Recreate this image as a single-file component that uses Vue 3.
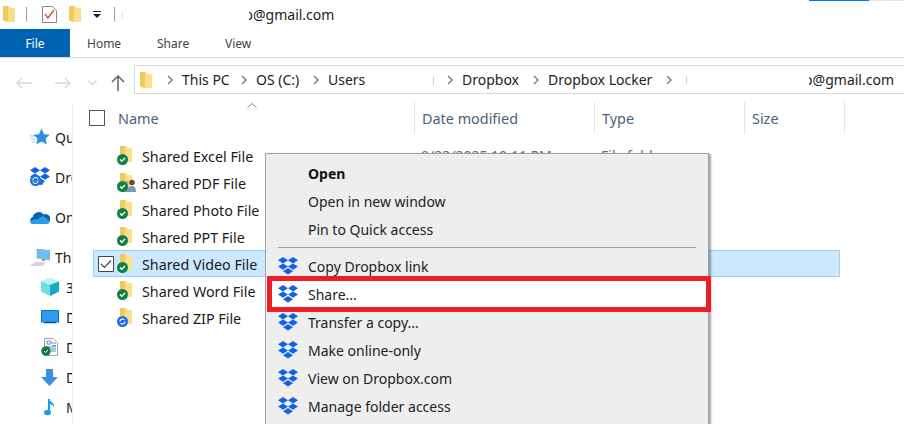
<script setup>
const crumbs = [
  { label: 'This PC', w: 59 },
  { label: 'OS (C:)', w: 57 },
  { label: 'Users', w: 119, tick: 105 },
  { label: 'Dropbox', w: 71 },
  { label: 'Dropbox Locker', w: 118 }
]
const nav = [
  { label: 'Quick access', icon: 'star', gap: true },
  { label: 'Dropbox', icon: 'dbx', gap: true },
  { label: 'OneDrive', icon: 'cloud', gap: true },
  { label: 'This PC', icon: 'pc' },
  { label: '3D Objects', icon: 'cube', sub: true },
  { label: 'Desktop', icon: 'desk', sub: true },
  { label: 'Documents', icon: 'doc', sub: true },
  { label: 'Downloads', icon: 'down', sub: true },
  { label: 'Music', icon: 'music', sub: true }
]
const files = [
  { name: 'Shared Excel File', badge: 'ok', date: '9/23/2025 10:11 PM', type: 'File folder' },
  { name: 'Shared PDF File', badge: 'ok', people: true },
  { name: 'Shared Photo File', badge: 'ok' },
  { name: 'Shared PPT File', badge: 'ok' },
  { name: 'Shared Video File', badge: 'ok', selected: true },
  { name: 'Shared Word File', badge: 'ok' },
  { name: 'Shared ZIP File', badge: 'sync' }
]
const menu = [
  { label: 'Open', bold: true },
  { label: 'Open in new window' },
  { label: 'Pin to Quick access' },
  { sep: true },
  { label: 'Copy Dropbox link', dbx: true },
  { label: 'Share...', dbx: true, mark: true },
  { label: 'Transfer a copy...', dbx: true },
  { label: 'Make online-only', dbx: true },
  { label: 'View on Dropbox.com', dbx: true },
  { label: 'Manage folder access', dbx: true }
]
</script>

<template>
  <div class="win">
    <svg class="defs" aria-hidden="true">
      <symbol id="folder" viewBox="0 0 12 16">
        <path d="M0 0h6l2 2h4v14H4L0 14z" fill="#fbe08c" />
        <path d="M0 0h5v14l-1 2-4-2z" fill="#f3c95f" />
      </symbol>
      <symbol id="dbx" viewBox="0 0 20 18">
        <path d="M5 0l5 3.2-5 3.2L0 3.2zM15 0l5 3.2-5 3.2-5-3.2zM5 6.4l5 3.2-5 3.2-5-3.2zM15 6.4l5 3.2-5 3.2-5-3.2zM10 11l5 3.3-5 3.2-5-3.2z" fill="#0f62e6" />
      </symbol>
    </svg>

    <header class="title">
      <svg class="ico-folder" width="12" height="16"><use href="#folder" /></svg>
      <i class="tsep"></i>
      <svg class="qa" width="15" height="17" viewBox="0 0 15 17">
        <path d="M.5.5h10l4 4v12H.5z" fill="#fff" stroke="#8a8a8a" />
        <path d="M3 8l3 4 6-8" fill="none" stroke="#e2571e" stroke-width="1.5" />
      </svg>
      <svg class="ico-folder f2" width="12" height="16"><use href="#folder" /></svg>
      <svg class="drop" width="8" height="7" viewBox="0 0 8 7">
        <path d="M0 0h8v1H0zM0 3h8L4 7z" fill="#222" />
      </svg>
      <i class="tsep s2"></i>
      <i class="tsep s3"></i>
      <span class="title-text"><span class="cut">o</span>@gmail.com</span>
      <span class="top-accent"><i></i><b></b></span>
    </header>

    <nav class="tabs">
      <span class="file">File</span>
      <span class="tab">Home</span>
      <span class="tab">Share</span>
      <span class="tab">View</span>
    </nav>

    <section class="addr-row">
      <div class="arrows">
        <svg width="16" height="12" viewBox="0 0 16 12"><path d="M16 6H1M6 1L1 6l5 5" fill="none" stroke="#d6d6d6" stroke-width="1.4" /></svg>
        <svg width="16" height="12" viewBox="0 0 16 12"><path d="M0 6h15M10 1l5 5-5 5" fill="none" stroke="#d6d6d6" stroke-width="1.4" /></svg>
        <svg width="9" height="6" viewBox="0 0 9 6"><path d="M.5.5l4 4 4-4" fill="none" stroke="#d6d6d6" stroke-width="1.4" /></svg>
        <svg width="14" height="16" viewBox="0 0 14 16"><path d="M7 16V1M1 7l6-6 6 6" fill="none" stroke="#6a6a6a" stroke-width="1.6" /></svg>
      </div>
      <div class="addr">
        <svg class="addr-folder" width="12" height="16"><use href="#folder" /></svg>
        <template v-for="c in crumbs" :key="c.label">
          <svg class="chev" width="6" height="10" viewBox="0 0 6 10"><path d="M1 1l4 4-4 4" fill="none" stroke="#7a7a7a" stroke-width="1.4" /></svg>
          <span class="crumb" :style="{ width: c.w + 'px' }">{{ c.label }}<i v-if="c.tick" class="tick" :style="{ left: c.tick + 'px' }"></i></span>
        </template>
        <svg class="chev" width="6" height="10" viewBox="0 0 6 10"><path d="M1 1l4 4-4 4" fill="none" stroke="#7a7a7a" stroke-width="1.4" /></svg>
        <i class="tick end"></i>
        <span class="addr-end"><span class="cut">o</span>@gmail.com</span>
      </div>
    </section>

    <div class="body">
      <aside class="side">
        <div v-for="n in nav" :key="n.label" class="side-row" :class="{ gap: n.gap, sub: n.sub }">
          <span class="side-ico">
            <svg v-if="n.icon === 'star'" width="20" height="18" viewBox="0 0 20 18">
              <path d="M11.500.5L14 6.300l5.800.5-4.200 3.800 1.200 5.900-5.300-3.100-5.300 3.100 1.200-5.900-4.200-3.800 5.800-.5z" fill="#2a8fe8" />
              <path d="M0 8h4M1 11h4M2 14h3" stroke="#8fc2ee" stroke-width="1" />
            </svg>
            <svg v-else-if="n.icon === 'dbx'" width="20" height="20" viewBox="0 0 20 20">
              <use href="#dbx" width="20" height="18" y="0" />
              <circle cx="5.500" cy="13.500" r="5.500" fill="#1e6fe0" />
              <circle cx="10.500" cy="15" r="3" fill="#1e6fe0" />
              <path d="M3 13.500a2.500 2.500 0 0 1 5-1M8 13.500a2.500 2.500 0 0 1-5 1" fill="none" stroke="#fff" />
            </svg>
            <svg v-else-if="n.icon === 'cloud'" width="20" height="14" viewBox="0 0 20 14">
              <path d="M3.500 14A3.500 3.500 0 0 1 2.800 7.100 6 6 0 0 1 13.500 4.500 4.800 4.800 0 0 1 19.800 11 3.500 3.500 0 0 1 17 14z" fill="#0c5fb2" />
              <path d="M0 10.500L7 9l6-3 6.800 5a3.500 3.500 0 0 1-2.800 3H3.500A3.500 3.500 0 0 1 0 10.500z" fill="#2c9be8" />
            </svg>
            <svg v-else-if="n.icon === 'pc'" width="20" height="17" viewBox="0 0 20 17">
              <path d="M12 9h3v3h-3z" fill="#9a9a9a" />
              <path d="M7 0l13 1.500V11L7 9z" fill="#6cc0f0" stroke="#8a9aa8" stroke-width=".6" />
              <path d="M0 16l6-3h9l-2 4H2z" fill="#d5d5d5" />
            </svg>
            <svg v-else-if="n.icon === 'cube'" width="18" height="18" viewBox="0 0 18 18">
              <path d="M9 0l9 3.500v10L9 18l-9-4.500v-10z" fill="#6fdce6" />
              <path d="M0 3.500L9 0l9 3.500L9 7z" fill="#bdf3f6" />
              <path d="M9 7l9-3.500v10L9 18z" fill="#17a8c4" />
            </svg>
            <svg v-else-if="n.icon === 'desk'" width="18" height="14" viewBox="0 0 18 14">
              <path d="M.5.500h17v12H.5z" fill="#2e9bf0" stroke="#106ebe" />
              <path d="M3 12.500h12" stroke="#0b4f92" stroke-width="1.500" />
              <path d="M1 12.500h1M16 12.500h1" stroke="#fff" />
            </svg>
            <svg v-else-if="n.icon === 'doc'" width="17" height="18" viewBox="0 0 17 18">
              <path d="M3.500.5h9l4 4v13h-13z" fill="#fff" stroke="#a0a0a0" />
              <path d="M6 3h4v3H6zM11 5h4M11 7.500h4M6 9h9M10 11h5M10 13h5" stroke="#5a8cc6" fill="none" />
              <circle cx="5" cy="13" r="4.800" fill="#107c41" />
              <path d="M3 13l1.500 1.500L7 12" fill="none" stroke="#fff" />
            </svg>
            <svg v-else-if="n.icon === 'down'" width="17" height="17" viewBox="0 0 17 17">
              <path d="M5 0h7v8h5l-8.500 9L0 8h5z" fill="#3c8fe4" />
            </svg>
            <svg v-else class="note" width="12" height="18" viewBox="0 0 12 18">
              <path d="M5 1v12" stroke="#1b9cf2" stroke-width="2" />
              <ellipse cx="3.500" cy="14.500" rx="3.500" ry="2.800" fill="#1b9cf2" />
              <path d="M5 0c0 4 6 4 5 9-1-2-3-3-5-3z" fill="#1b9cf2" />
            </svg>
          </span>
          <span class="side-label">{{ n.label }}</span>
        </div>
      </aside>

      <main class="list">
        <span class="sort">
          <svg width="10" height="5" viewBox="0 0 10 5"><path d="M.5 4.500L5 .5l4.500 4" fill="none" stroke="#8a8a8a" /></svg>
        </span>
        <div class="cols">
          <div class="col name-col"><i class="box"></i><span>Name</span></div>
          <div class="col date-col">Date modified</div>
          <div class="col type-col">Type</div>
          <div class="col size-col">Size</div>
        </div>

        <div class="rows">
          <div v-for="f in files" :key="f.name" class="row" :class="{ selected: f.selected }">
            <span class="check">
              <svg v-if="f.selected" width="16" height="16" viewBox="0 0 16 16">
                <path d="M.5.500h15v15H.5z" fill="#fff" stroke="#444" />
                <path d="M3 8l3.500 3.500L13 4.500" fill="none" stroke="#444" stroke-width="1.200" />
              </svg>
            </span>
            <span class="file-ico">
              <svg class="file-folder" width="12" height="16"><use href="#folder" /></svg>
              <svg v-if="f.people" class="people" width="13" height="13" viewBox="0 0 13 13">
                <circle cx="3.500" cy="4" r="2.500" fill="#d9b48a" />
                <circle cx="9" cy="3.500" r="2.800" fill="#6b4a34" />
                <path d="M0 13c0-4 2-5 4-5s3 1 3 5zM5 13c0-5 2-6 4-6s4 1 4 6z" fill="#7a98b8" />
              </svg>
              <svg class="badge" width="11" height="11" viewBox="0 0 11 11">
                <circle cx="5.500" cy="5.500" r="5.500" :fill="f.badge === 'ok' ? '#128044' : '#1a6fe8'" />
                <path v-if="f.badge === 'ok'" d="M3 5.500l1.800 1.800L8 4" fill="none" stroke="#fff" stroke-width="1.300" />
                <path v-else d="M3 5.500a2.500 2.500 0 0 1 4.500-1.500M8 5.500a2.500 2.500 0 0 1-4.500 1.500" fill="none" stroke="#fff" stroke-width="1.100" />
              </svg>
            </span>
            <span class="file-name">{{ f.name }}</span>
            <span class="file-date">{{ f.date }}</span>
            <span class="file-type">{{ f.type }}</span>
          </div>
        </div>

        <div class="menu">
          <template v-for="(m, i) in menu" :key="i">
            <div v-if="m.sep" class="menu-sep"></div>
            <div v-else class="menu-item" :class="{ bold: m.bold }">
              <i v-if="m.mark" class="mark"></i>
              <svg v-if="m.dbx" class="menu-dbx" width="20" height="18"><use href="#dbx" /></svg>
              <span class="menu-label">{{ m.label }}</span>
            </div>
          </template>
        </div>
      </main>
    </div>
  </div>
</template>

<style>
html, body { margin: 0; background: #fff; overflow: hidden; }
</style>

<style scoped>
.win {
  width: 904px;
  height: 424px;
  overflow: hidden;
  background: #fff;
  font-family: "Noto Sans", "Open Sans", sans-serif;
  font-size: 14px;
  color: #1a1a1a;
  display: flex;
  flex-direction: column;
}
.defs { position: absolute; width: 0; height: 0; }
.cut {
  display: inline-block;
  width: 4px;
  overflow: hidden;
  direction: rtl;
  vertical-align: bottom;
}

.title {
  height: 29px;
  flex: none;
  display: flex;
  align-items: center;
  position: relative;
  padding-left: 3px;
}
.ico-folder { flex: none; margin-top: -1px; }
.tsep { width: 1px; height: 15px; background: #a0a0a0; margin-left: 11px; flex: none; }
.qa { margin-left: 15px; flex: none; }
.f2 { margin-left: 12px; }
.drop { margin-left: 12px; flex: none; }
.tsep.s2 { margin-left: 13px; }
.tsep.s3 { margin-left: 7px; height: 8px; background: #e4e4e4; }
.title-text { margin-left: 126px; font-size: 14px; color: #222; }
.top-accent { position: absolute; top: 0; left: 809px; right: 0; display: flex; height: 1px; }
.top-accent i { width: 60px; background: #0078d7; }
.top-accent b { flex: 1; background: #e5e5e5; }

.tabs {
  height: 28px;
  flex: none;
  display: flex;
  border-bottom: 1px solid #dadbdc;
  font-size: 12px;
}
.file {
  width: 70px;
  background: #0063b1;
  color: #fff;
  display: flex;
  align-items: center;
  justify-content: center;
}
.tab { display: flex; align-items: center; color: #444; margin-left: 17px; width: 53px; }
.tab:last-child { margin-left: 15px; }

.addr-row { height: 35px; flex: none; display: flex; padding-top: 7px; box-sizing: content-box; }
.arrows {
  width: 134px;
  flex: none;
  display: flex;
  align-items: center;
  padding-left: 16px;
  box-sizing: border-box;
  gap: 0;
}
.arrows svg:nth-child(2) { margin-left: 23px; }
.arrows svg:nth-child(3) { margin-left: 17px; }
.arrows svg:nth-child(4) { margin-left: 14px; }
.addr {
  flex: 1;
  height: 29px;
  box-sizing: border-box;
  border: 1px solid #d9d9d9;
  border-right: 0;
  display: flex;
  align-items: center;
  padding-left: 5px;
  color: #222;
  white-space: nowrap;
}
.addr-folder { flex: none; margin-right: 15px; }
.chev { flex: none; margin-right: 9px; }
.crumb { flex: none; position: relative; }
.tick { position: absolute; top: 7px; width: 1px; height: 8px; background: #d0d0d0; }
.tick.end { position: static; height: 8px; margin-left: 5px; flex: none; }
.addr-end { margin-left: auto; margin-right: 10px; }

.body { flex: 1; display: flex; margin-top: 2px; min-height: 0; }
.side {
  width: 72px;
  flex: none;
  border-right: 1px solid #f0f0f0;
  padding-top: 20px;
  overflow: hidden;
}
.side-row { height: 30px; display: flex; align-items: center; white-space: nowrap; padding-left: 30px; }
.side-row.gap { margin-bottom: 10px; }
.side-row.sub { padding-left: 41px; }
.side-ico { width: 25px; flex: none; display: flex; align-items: center; }
.note { margin-left: 3px; }

.list { flex: 1; position: relative; min-width: 0; }
.sort { position: absolute; left: 174px; top: 1px; display: flex; }
.cols { display: flex; height: 32px; color: #4c607a; font-size: 14.4px; }
.col { display: flex; align-items: center; box-sizing: border-box; border-right: 1px solid #e5e5e5; padding-left: 7px; flex: none; }
.name-col { width: 342px; padding-left: 16px; }
.box { width: 16px; height: 16px; box-sizing: border-box; border: 1px solid #555; margin-right: 13px; }
.date-col { width: 180px; }
.type-col { width: 150px; }
.size-col { width: 100px; }

.rows { margin: 8px 0 0 20px; width: 747px; }
.row {
  height: 27px;
  box-sizing: border-box;
  display: flex;
  align-items: center;
  border: 1px solid transparent;
  position: relative;
}
.row.selected { background: #cce8ff; border-color: #99d1ff; }
.check { width: 23px; flex: none; padding-left: 4px; box-sizing: border-box; display: flex; }
.file-ico { width: 25px; height: 20px; flex: none; position: relative; }
.file-folder { position: absolute; left: 3px; top: 0; }
.people { position: absolute; left: 6px; top: 6px; }
.badge { position: absolute; left: 0; top: 8px; }
.file-name { width: 279px; flex: none; color: #1a1a1a; font-size: 14.3px; padding-top: 2px; }
.file-date { width: 180px; flex: none; color: #6d6d6d; }
.file-type { color: #6d6d6d; }

.menu {
  position: absolute;
  left: 192px;
  top: 51px;
  width: 444px;
  height: 300px;
  box-sizing: border-box;
  background: #eeeeee;
  border: 1px solid #a0a0a0;
  padding-top: 5px;
  box-shadow: 3px 0 2px -1px rgba(0, 0, 0, 0.35);
  z-index: 2;
}
.menu-item {
  height: 28px;
  display: flex;
  align-items: center;
  padding-left: 42px;
  position: relative;
  color: #222;
}
.menu-item.bold { font-weight: 700; color: #111; }
.menu-sep { height: 1px; margin: 4px 12px 4px 12px; background: #a0a0a0; }
.menu-dbx { position: absolute; left: 12px; top: 5px; z-index: 1; }
.menu-label { position: relative; z-index: 1; }
.mark {
  position: absolute;
  left: 1px;
  right: -3px;
  top: -4px;
  height: 36px;
  box-sizing: border-box;
  background: #fff;
  border: 5px solid #ee1c25;
}
</style>
